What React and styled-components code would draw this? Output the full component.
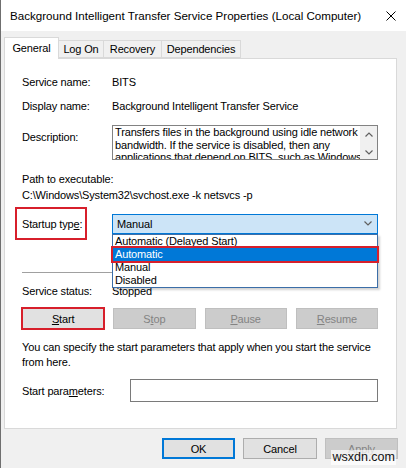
import React from "react";
import styled, { createGlobalStyle } from "styled-components";

const GlobalStyle = createGlobalStyle`
  html, body {
    margin: 0;
    padding: 0;
    background: #f0f0f0;
  }
  body {
    font-family: "Liberation Sans", Arial, sans-serif;
  }
`;

const Window = styled.div`
  position: relative;
  width: 406px;
  height: 468px;
  box-sizing: border-box;
  overflow: hidden;
  display: flex;
  flex-direction: column;
  background: #f0f0f0;
  border-left: 1px solid #6f6f6f;
  color: #000;
  font-size: 11px;
  letter-spacing: -0.15px;
`;

const TitleBar = styled.div`
  height: 31px;
  flex: none;
  display: flex;
  align-items: center;
  justify-content: space-between;
  padding: 0 10px 0 9px;
  background: #fff;
  font-size: 11.6px;
  letter-spacing: 0;
`;

const Body = styled.div`
  display: flex;
  flex-direction: column;
  padding: 6px 9px 0 3px;
`;

const TabRow = styled.div`
  display: flex;
  align-items: flex-end;
  height: 21px;
`;

const Tab = styled.div`
  position: relative;
  z-index: ${(p) => (p.$active ? 2 : 1)};
  box-sizing: border-box;
  width: ${(p) => p.$w}px;
  height: ${(p) => (p.$active ? 22 : 18)}px;
  margin-bottom: ${(p) => (p.$active ? -1 : 0)}px;
  margin-left: ${(p) => (p.$active ? 0 : -1)}px;
  display: flex;
  align-items: center;
  justify-content: center;
  background: ${(p) => (p.$active ? "#fff" : "#f0f0f0")};
  border: 1px solid #d9d9d9;
  border-bottom: ${(p) => (p.$active ? "none" : "1px solid #d9d9d9")};
  padding-bottom: ${(p) => (p.$active ? 2 : 0)}px;
`;

const Panel = styled.div`
  position: relative;
  box-sizing: border-box;
  height: 371px;
  display: flex;
  flex-direction: column;
  padding: 11px 18px 0 17px;
  background: #fff;
  border: 1px solid #d9d9d9;
`;

const Row = styled.div`
  display: flex;
  align-items: ${(p) => p.$align || "center"};
  height: ${(p) => p.$h}px;
  margin-top: ${(p) => p.$mt || 0}px;
  flex: none;
`;

const Label = styled.div`
  width: ${(p) => p.$w || 90}px;
  flex: none;
  line-height: 14px;
  padding-top: ${(p) => p.$pt || 0}px;
`;

const Line = styled.div`
  line-height: ${(p) => p.$lh}px;
  margin-top: ${(p) => p.$mt || 0}px;
  white-space: nowrap;
`;

const DescBox = styled.div`
  box-sizing: border-box;
  width: 266px;
  height: 35px;
  display: flex;
  border: 1px solid #828282;
  background: #fff;
  overflow: hidden;
`;

const DescText = styled.div`
  flex: 1;
  padding: 0 2px;
  line-height: 12.5px;
  white-space: nowrap;
  overflow: hidden;
`;

const ScrollTrack = styled.div`
  width: 17px;
  flex: none;
  display: flex;
  flex-direction: column;
  align-items: center;
  justify-content: space-between;
  padding: 6px 0 4px;
  background: #f0f0f0;
`;

const Underline = styled.span`
  text-decoration: underline;
`;

const MarkedLabel = styled.div`
  box-sizing: border-box;
  width: 72px;
  height: 33px;
  margin-left: -7px;
  padding-left: 5px;
  display: flex;
  align-items: center;
  border: 2px solid #d71f2b;
`;

const Combo = styled.div`
  position: relative;
  box-sizing: border-box;
  width: 266px;
  height: 20px;
  margin-left: 25px;
  display: flex;
  align-items: center;
  justify-content: space-between;
  padding: 0 5px 0 4px;
  background: #cce4f7;
  border: 1px solid #0078d7;
`;

const DropList = styled.div`
  position: absolute;
  z-index: 5;
  top: calc(100% + 1px);
  left: -1px;
  width: 266px;
  box-sizing: border-box;
  background: #fff;
  border: 1px solid #3c6ea8;
  box-shadow: 2px 2px 2px rgba(0, 0, 0, 0.18);
`;

const DropItem = styled.div`
  height: 13px;
  line-height: 13px;
  padding-left: 2px;
  white-space: nowrap;
  background: ${(p) => (p.$selected ? "#0078d7" : "transparent")};
  color: ${(p) => (p.$selected ? "#fff" : "#000")};
  outline: ${(p) => (p.$marked ? "2px solid #d71f2b" : "none")};
`;

const Separator = styled.div`
  height: 1px;
  margin-top: 32px;
  background: #a0a0a0;
  flex: none;
`;

const ButtonGrid = styled.div`
  display: grid;
  grid-template-columns: repeat(4, 1fr);
  gap: 9px;
  margin-top: 9px;
  height: 21px;
`;

const Button = styled.div`
  box-sizing: border-box;
  height: 21px;
  width: ${(p) => (p.$w ? `${p.$w}px` : "auto")};
  display: flex;
  align-items: center;
  justify-content: center;
  background: ${(p) => (p.$disabled ? "#cccccc" : "#e1e1e1")};
  color: ${(p) => (p.$disabled ? "#838383" : "#000")};
  border: ${(p) =>
    p.$default ? "2px solid #0078d7" : p.$disabled ? "1px solid #bfbfbf" : "1px solid #adadad"};
  outline: ${(p) => (p.$marked ? "2px solid #d71f2b" : "none")};
  outline-offset: -1px;
`;

const Paragraph = styled.div`
  margin-top: 11px;
  line-height: 15px;
  white-space: nowrap;
`;

const TextInput = styled.div`
  flex: 1;
  height: 23px;
  box-sizing: border-box;
  border: 1px solid #7a7a7a;
  background: #fff;
`;

const Footer = styled.div`
  display: flex;
  justify-content: flex-end;
  gap: 8px;
  margin-top: 9px;
  margin-right: -1px;
`;

const Watermark = styled.div`
  position: absolute;
  right: 10px;
  bottom: 3px;
  padding: 0 1px;
  font-size: 12.5px;
  letter-spacing: 0;
  line-height: 15px;
  color: #111;
  background: rgba(255, 255, 255, 0.7);
`;

function CloseIcon() {
  return (
    <svg width="10" height="10" viewBox="0 0 10 10">
      <path d="M0.5 0.5 L9.5 9.5 M9.5 0.5 L0.5 9.5" stroke="#000" strokeWidth="1" />
    </svg>
  );
}

function Chevron({ up }) {
  return (
    <svg width="8" height="5" viewBox="0 0 8 5">
      <path
        d={up ? "M0.5 4.5 L4 1 L7.5 4.5" : "M0.5 0.5 L4 4 L7.5 0.5"}
        fill="none"
        stroke="#606060"
        strokeWidth="1.2"
      />
    </svg>
  );
}

const tabs = [
  { name: "General", w: 55, active: true },
  { name: "Log On", w: 46 },
  { name: "Recovery", w: 59 },
  { name: "Dependencies", w: 80 },
];

const startupOptions = ["Automatic (Delayed Start)", "Automatic", "Manual", "Disabled"];

export default function App() {
  return (
    <>
      <GlobalStyle />
      <Window>
        <TitleBar>
          <span>Background Intelligent Transfer Service Properties (Local Computer)</span>
          <CloseIcon />
        </TitleBar>
        <Body>
          <TabRow>
            {tabs.map((t) => (
              <Tab key={t.name} $w={t.w} $active={t.active}>
                {t.name}
              </Tab>
            ))}
          </TabRow>
          <Panel>
            <Row $h={24}>
              <Label>Service name:</Label>
              <span>BITS</span>
            </Row>
            <Row $h={24}>
              <Label>Display name:</Label>
              <span>Background Intelligent Transfer Service</span>
            </Row>
            <Row $h={35} $mt={7} $align="flex-start">
              <Label $pt={5}>Description:</Label>
              <DescBox>
                <DescText>
                  Transfers files in the background using idle network
                  <br />
                  bandwidth. If the service is disabled, then any
                  <br />
                  applications that depend on BITS, such as Windows
                </DescText>
                <ScrollTrack>
                  <Chevron up />
                  <Chevron />
                </ScrollTrack>
              </DescBox>
            </Row>
            <Line $lh={16} $mt={11}>
              Path to executable:
            </Line>
            <Line $lh={17}>C:\Windows\System32\svchost.exe -k netsvcs -p</Line>
            <Row $h={33} $mt={3}>
              <MarkedLabel>
                <span>
                  Startup typ<Underline>e</Underline>:
                </span>
              </MarkedLabel>
              <Combo>
                <span>Manual</span>
                <Chevron />
                <DropList>
                  {startupOptions.map((o) => (
                    <DropItem key={o} $selected={o === "Automatic"} $marked={o === "Automatic"}>
                      {o}
                    </DropItem>
                  ))}
                </DropList>
              </Combo>
            </Row>
            <Separator />
            <Row $h={16} $mt={10}>
              <Label>Service status:</Label>
              <span>Stopped</span>
            </Row>
            <ButtonGrid>
              <Button $marked>
                <span>
                  <Underline>S</Underline>tart
                </span>
              </Button>
              <Button $disabled>
                <span>
                  S<Underline>t</Underline>op
                </span>
              </Button>
              <Button $disabled>
                <span>
                  <Underline>P</Underline>ause
                </span>
              </Button>
              <Button $disabled>
                <span>
                  <Underline>R</Underline>esume
                </span>
              </Button>
            </ButtonGrid>
            <Paragraph>
              You can specify the start parameters that apply when you start the service
              <br />
              from here.
            </Paragraph>
            <Row $h={23} $mt={9}>
              <Label $w={108}>
                Start para<Underline>m</Underline>eters:
              </Label>
              <TextInput />
            </Row>
          </Panel>
          <Footer>
            <Button $w={73} $default>
              OK
            </Button>
            <Button $w={74}>Cancel</Button>
            <Button $w={73} $disabled>
              <span>
                <Underline>A</Underline>pply
              </span>
            </Button>
          </Footer>
        </Body>
        <Watermark>wsxdn.com</Watermark>
      </Window>
    </>
  );
}
